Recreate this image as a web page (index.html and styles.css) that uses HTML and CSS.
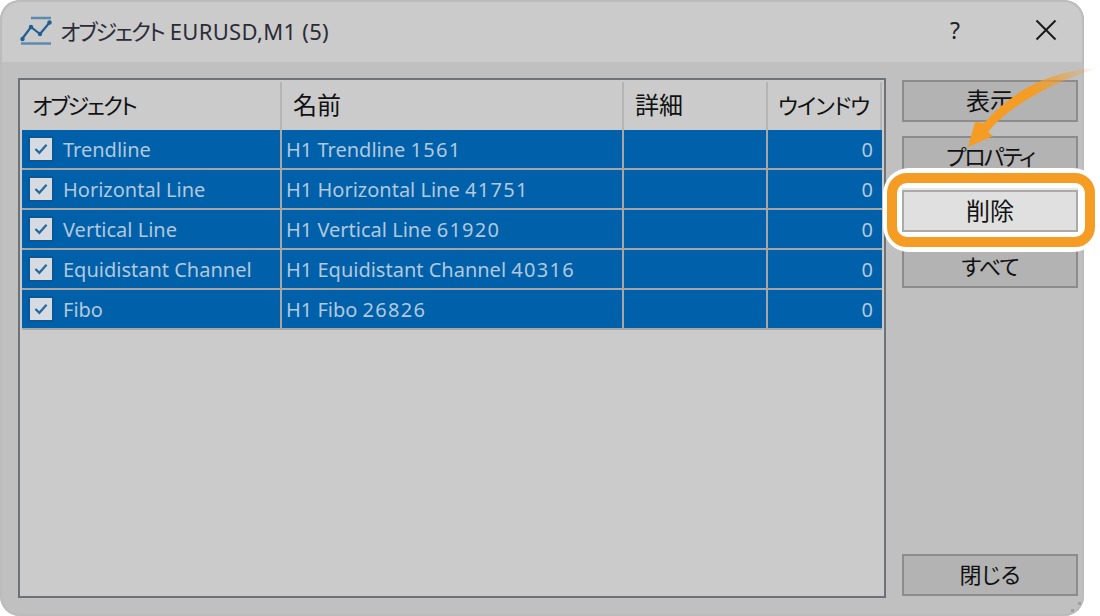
FILE: index.html
```html
<!DOCTYPE html>
<html lang="ja">
<head>
<meta charset="utf-8">
<title>オブジェクト</title>
<link rel="stylesheet" href="styles.css">
</head>
<body>
<div class="window">
  <header class="titlebar">
    <svg class="app-icon" width="32" height="32" viewBox="0 0 32 32">
      <path class="ic-rule" d="M11 3H31M1 28.500H31"/>
      <path class="ic-line" d="M2 24L11 12L20 19L30 7"/>
      <circle class="ic-dot" cx="2.500" cy="24" r="2.200"/><circle class="ic-dot" cx="11" cy="12" r="2.200"/><circle class="ic-dot" cx="20" cy="19" r="2.200"/><circle class="ic-dot" cx="29.500" cy="7.500" r="2.200"/>
    </svg>
    <span class="title"><span class="ja tight">オブジェクト</span> EURUSD,M1 (5)</span>
    <span class="help">?</span>
    <svg class="close" width="22" height="22" viewBox="0 0 22 22"><path d="M1.500 1.500L20.500 20.500M20.500 1.500L1.500 20.500"/></svg>
  </header>
  <main class="content">
    <section class="list">
      <div class="row head">
        <div class="cell ja tight first">オブジェクト</div>
        <div class="cell ja kanji">名前</div>
        <div class="cell ja kanji">詳細</div>
        <div class="cell ja snug win">ウインドウ</div>
      </div>
      <div class="row item">
        <div class="cell"><span class="check"><svg width="14" height="12" viewBox="0 0 16 14"><path d="M1.500 7L6 11.500L14.500 2"/></svg></span>Trendline</div>
        <div class="cell">H1 Trendline <span class="id">1561</span></div><div class="cell"></div><div class="cell num">0</div>
      </div>
      <div class="row item">
        <div class="cell"><span class="check"><svg width="14" height="12" viewBox="0 0 16 14"><path d="M1.500 7L6 11.500L14.500 2"/></svg></span>Horizontal Line</div>
        <div class="cell">H1 Horizontal Line <span class="id">41751</span></div><div class="cell"></div><div class="cell num">0</div>
      </div>
      <div class="row item">
        <div class="cell"><span class="check"><svg width="14" height="12" viewBox="0 0 16 14"><path d="M1.500 7L6 11.500L14.500 2"/></svg></span>Vertical Line</div>
        <div class="cell">H1 Vertical Line <span class="id">61920</span></div><div class="cell"></div><div class="cell num">0</div>
      </div>
      <div class="row item">
        <div class="cell"><span class="check"><svg width="14" height="12" viewBox="0 0 16 14"><path d="M1.500 7L6 11.500L14.500 2"/></svg></span>Equidistant Channel</div>
        <div class="cell">H1 Equidistant Channel <span class="id">40316</span></div><div class="cell"></div><div class="cell num">0</div>
      </div>
      <div class="row item">
        <div class="cell"><span class="check"><svg width="14" height="12" viewBox="0 0 16 14"><path d="M1.500 7L6 11.500L14.500 2"/></svg></span>Fibo</div>
        <div class="cell">H1 Fibo <span class="id">26826</span></div><div class="cell"></div><div class="cell num">0</div>
      </div>
    </section>
    <aside class="actions">
      <button class="btn ja kanji">表示</button>
      <button class="btn ja tight">プロパティ</button>
      <button class="btn ja kanji active">削除</button>
      <button class="btn ja snug">すべて</button>
      <button class="btn ja last">閉じる</button>
    </aside>
  </main>
  <svg class="grip" width="12" height="12" viewBox="0 0 12 12"><path d="M8 0h3v3H8zM1 7h3v3H1zM8 7h3v3H8z"/></svg>
</div>
<div class="callout"></div>
<svg class="arrow" width="140" height="90" viewBox="0 0 140 90">
  <defs>
    <linearGradient id="fade" x1="138" y1="8" x2="30" y2="70" gradientUnits="userSpaceOnUse">
      <stop offset="0" stop-color="#f59c24" stop-opacity="0"/>
      <stop offset="0.550" stop-color="#f59c24"/>
      <stop offset="1" stop-color="#f59c24"/>
    </linearGradient>
  </defs>
  <path fill="url(#fade)" d="M138 8C105 9 60 22 24 63L15 62L8 87L33 76L28 72C50 45 90 24 138 8Z"/>
</svg>
</body>
</html>
```
FILE: styles.css
```css
* { box-sizing: border-box; }
html, body { margin: 0; height: 100%; }
body {
  position: relative;
  width: 1100px;
  height: 616px;
  overflow: hidden;
  background: #fff;
  font-family: "Noto Sans", "Noto Sans CJK JP", sans-serif;
  font-size: 20px;
  color: #111;
}
.ja {
  font-family: "Noto Sans CJK JP", sans-serif;
  font-size: 22px;
  font-feature-settings: "palt";
}
.kanji { font-size: 24px; }
.tight { letter-spacing: -2px; }
.snug { letter-spacing: -1px; }
.window {
  position: relative;
  width: 1084px;
  height: 616px;
  display: flex;
  flex-direction: column;
  background: #c0c0c0;
  border-radius: 20px;
  overflow: hidden;
  box-shadow: inset 0 0 0 2px #bcbcbc;
}
.titlebar {
  height: 62px;
  flex: none;
  display: flex;
  align-items: center;
  padding: 0 27px 4px 18px;
  background: #cbcbcb;
  border-top: 2px solid #bcbcbc;
  border-left: 2px solid #bcbcbc;
  border-right: 2px solid #bcbcbc;
  border-top-left-radius: 20px;
  border-top-right-radius: 20px;
}
.app-icon { margin-right: 8px; margin-top: 1px; flex: none; }
.ic-rule { fill: none; stroke: #5c8bb0; stroke-width: 2.500; }
.ic-line { fill: none; stroke: #1f5f94; stroke-width: 2.200; }
.ic-dot { fill: #1f5f94; }
.title { flex: 1; font-size: 22px; letter-spacing: 0.300px; color: #2c2c38; white-space: pre; }
.title .tight { letter-spacing: -2px; }
.help { width: 24px; text-align: center; margin-right: 68px; font-size: 23px; color: #222; }
.close { margin-right: -2px; }
.close path { fill: none; stroke: #1a1a1a; stroke-width: 2; }
.content {
  flex: 1;
  min-height: 0;
  display: flex;
  padding: 16px 6px 18px 18px;
  gap: 16px;
}
.list {
  width: 868px;
  border: 2px solid #6d7276;
  background: #cbcbcb;
  padding: 2px 2px 0 2px;
}
.row {
  display: grid;
  grid-template-columns: 260px 342px 144px 114px;
}
.head { height: 48px; align-items: stretch; }
.head .cell {
  border-right: 2px solid #b5b5b5;
  display: flex;
  align-items: center;
  padding: 0 0 5px 11px;
  color: #111;
}
.head .first { padding-left: 10px; }
.head .win { padding-left: 10px; }
.item {
  height: 40px;
  background: #0060aa;
  border-bottom: 2px solid #a6a6a6;
  color: #b3c8dc;
}
.item .cell {
  display: flex;
  align-items: center;
  border-right: 2px solid #a6a6a6;
  padding-left: 4px;
  white-space: pre;
}
.item .cell:first-child { padding-left: 5px; }
.item .cell:last-child { border-right: none; }
.item .num { justify-content: flex-end; padding-right: 9px; }
.id { letter-spacing: 1.300px; }
.check {
  width: 26px;
  height: 26px;
  margin: 0 9px 0 1px;
  flex: none;
  display: flex;
  align-items: center;
  justify-content: center;
  background: #d5dbe1;
  border: 2px solid #0b5695;
}
.check path { fill: none; stroke: #26689f; stroke-width: 2.600; }
.actions {
  width: 176px;
  display: flex;
  flex-direction: column;
  padding: 2px 0;
  gap: 14px;
}
.btn {
  height: 42px;
  flex: none;
  background: #b3b3b3;
  border: 2px solid #8c8c8c;
  color: #111;
  padding: 0 0 4px;
}
.btn.active {
  margin-top: -2px;
  background: #e0e0e0;
  border-color: #aaa;
  position: relative;
  z-index: 3;
  box-shadow: 0 -2px 0 #e8e8e8;
}
.btn.last { margin-top: auto; }
.grip { position: absolute; right: 2px; bottom: 2px; }
.grip path { fill: #a0a0a0; }
.callout {
  position: absolute;
  z-index: 2;
  left: 883px;
  top: 168px;
  width: 216px;
  height: 84px;
  background: #fff;
  border-radius: 26px;
}
.callout::before {
  content: "";
  position: absolute;
  left: 4px;
  right: 4px;
  top: 5px;
  bottom: 5px;
  border: 10px solid #f59c24;
  border-radius: 20px;
}
.arrow { position: absolute; z-index: 4; left: 960px; top: 60px; }
```
